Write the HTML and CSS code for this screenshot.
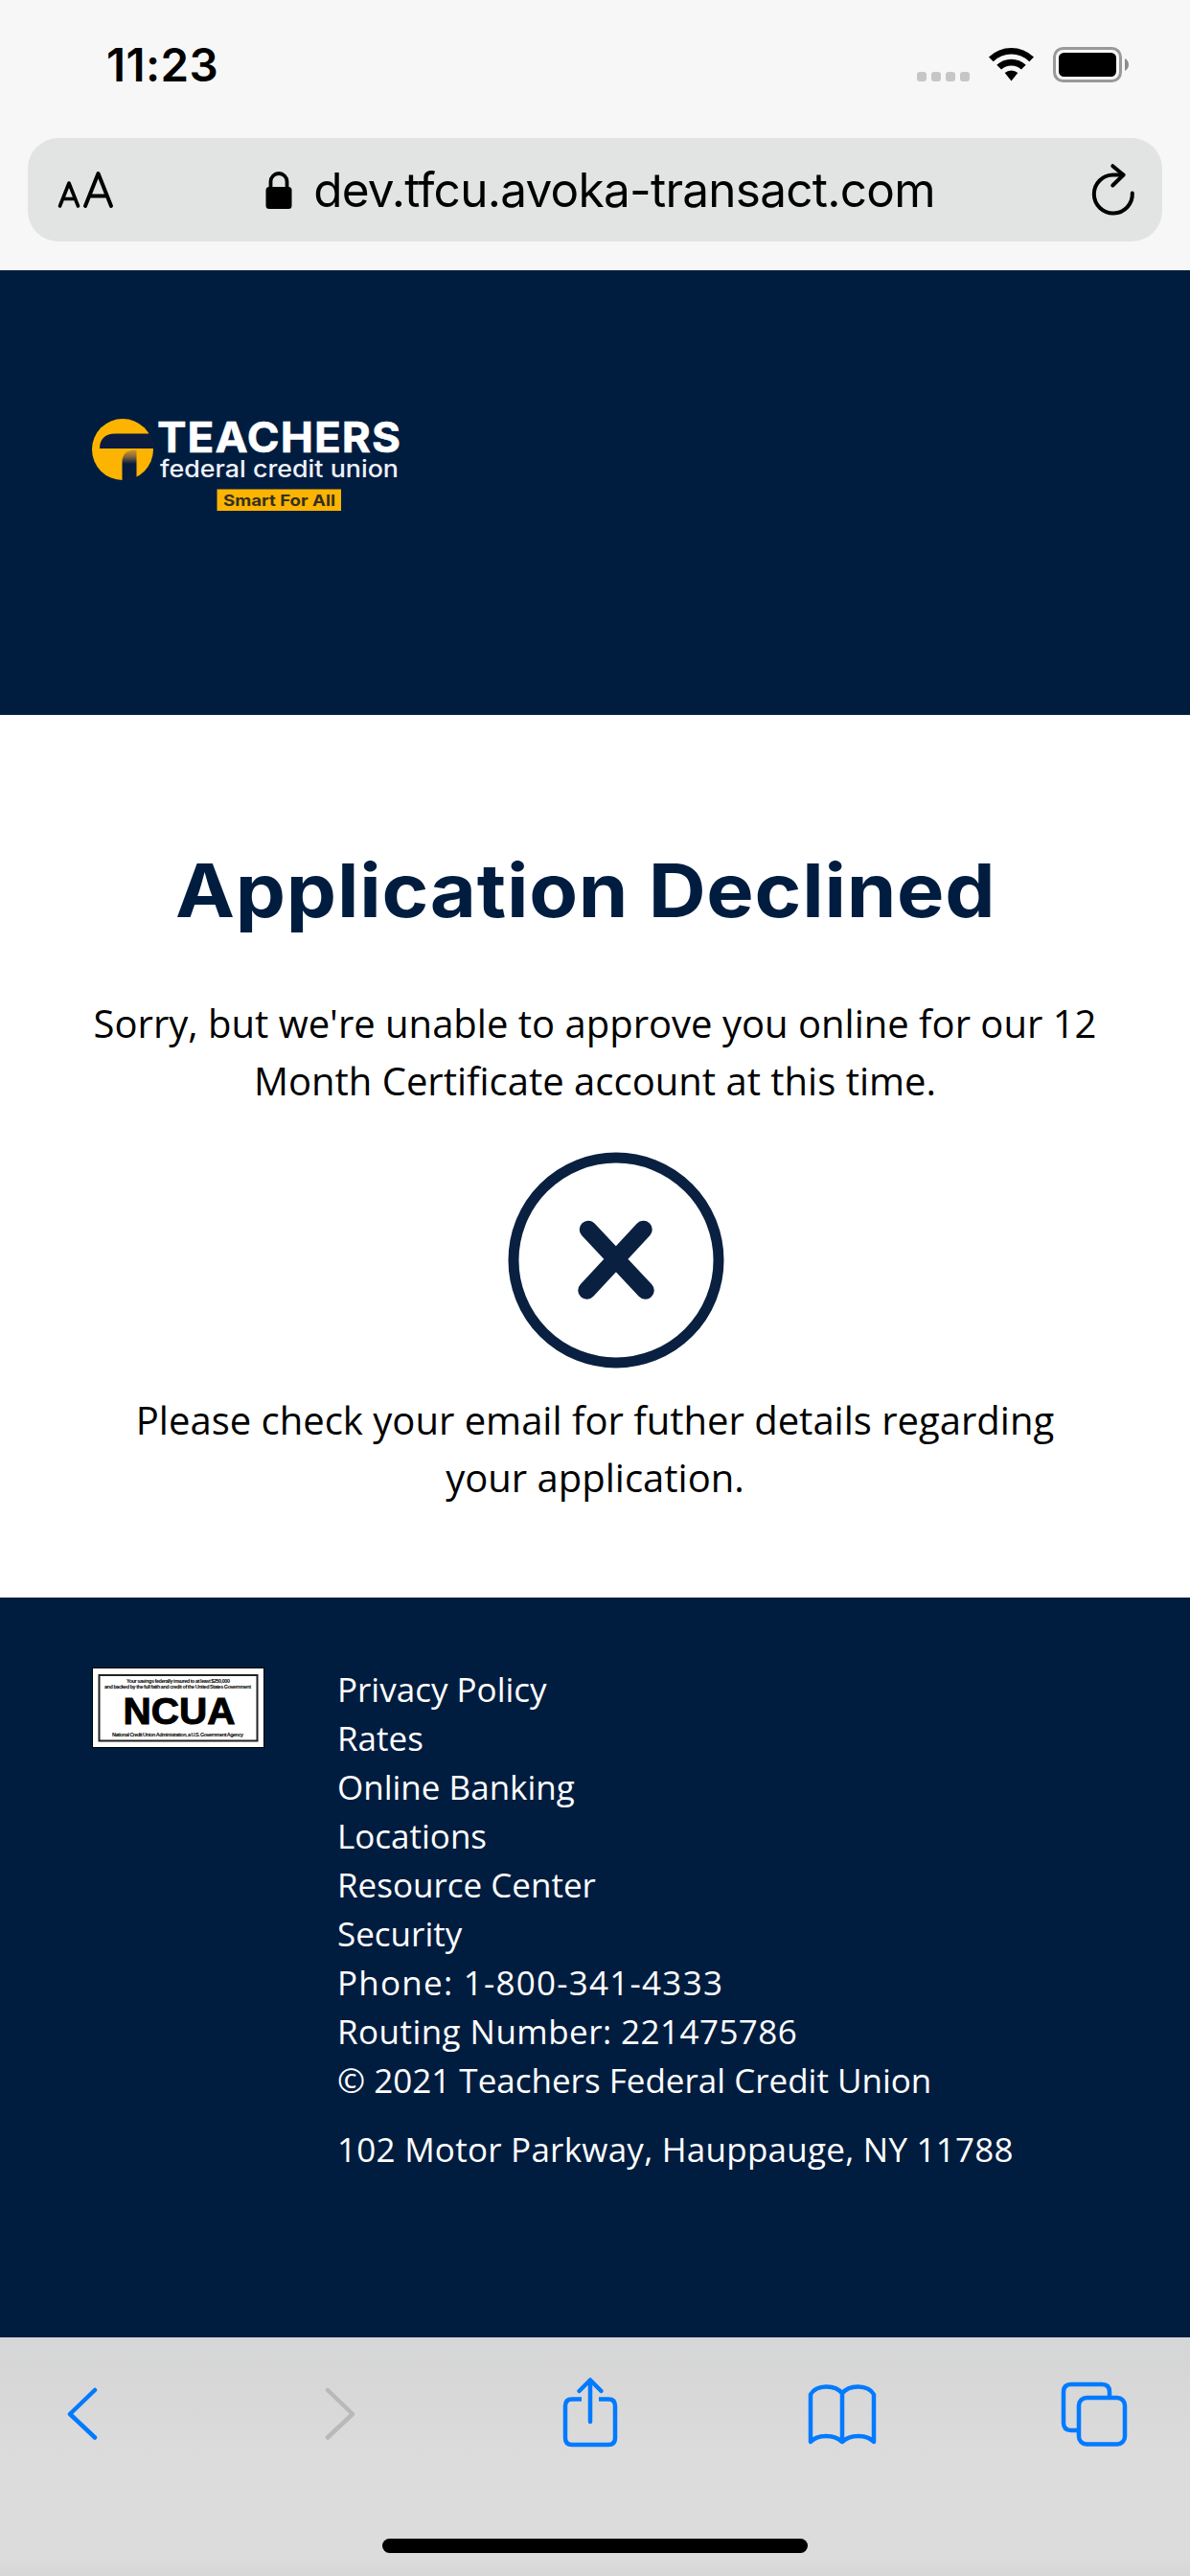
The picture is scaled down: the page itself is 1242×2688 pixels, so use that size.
FILE: index.html
```html
<!DOCTYPE html>
<html lang="en">
<head>
<meta charset="utf-8">
<title>Application Declined</title>
<link rel="stylesheet" href="styles.css">
</head>
<body>
<div class="screen">
  <header class="chrome">
    <div class="status">
      <span class="time">11:23</span>
      <svg class="status-icons" width="224" height="40" viewBox="0 0 224 40">
        <g fill="#c6c6c6">
          <rect x="2" y="27" width="10" height="10" rx="3"/>
          <rect x="17" y="27" width="10" height="10" rx="3"/>
          <rect x="32" y="27" width="10" height="10" rx="3"/>
          <rect x="47" y="27" width="10" height="10" rx="3"/>
        </g>
        <path d="M77 11.500A34 34 0 0 1 124 11.500L119.300 16.200A27 27 0 0 0 81.700 16.200Z"/>
        <path d="M85.300 19.800A22 22 0 0 1 115.700 19.800L110.900 24.600A15 15 0 0 0 90.100 24.600Z"/>
        <path d="M93.700 28.100A10 10 0 0 1 107.300 28.100L100.500 36.500Z"/>
        <rect x="145.500" y="2.500" width="69" height="34" rx="9" fill="none" stroke="#999" stroke-width="3"/>
        <rect x="150" y="7" width="60" height="25" rx="5.500"/>
        <path d="M219 13c5.300 2.300 5.300 10.700 0 13z" fill="#8c8c8c"/>
      </svg>
    </div>
    <div class="address-bar">
      <svg class="text-size" width="60" height="40" viewBox="0 0 60 40" fill="none" stroke="#000" stroke-width="3.600" stroke-linecap="round" stroke-linejoin="round">
        <path d="M3.500 37L13 13L22.500 37M7 29.500H19"/>
        <path stroke-width="4" d="M30 37L43.500 3L57 37M34.500 26.500H52.500"/>
      </svg>
      <div class="host">
        <svg width="28" height="40" viewBox="0 0 28 40">
          <rect x="0.500" y="17" width="27" height="23" rx="3.500"/>
          <path d="M5.500 18V11.500a8.500 8.500 0 0 1 17 0V18" fill="none" stroke="#000" stroke-width="3.800"/>
        </svg>
        <span class="url">dev.tfcu.avoka-transact.com</span>
      </div>
      <svg class="reload" width="48" height="56" viewBox="0 0 48 56" fill="none" stroke="#000" stroke-width="4" stroke-linecap="round" stroke-linejoin="round">
        <path d="M43.800 31.500A20 20 0 1 1 23.800 12.500H34.500"/>
        <path d="M23.300 3.200L34.500 12.500L23.300 23.500"/>
      </svg>
    </div>
  </header>

  <div class="banner">
    <svg class="logo" width="324" height="98" viewBox="0 0 324 98">
      <defs>
        <clipPath id="disc"><circle cx="32" cy="32" r="32.500"/></clipPath>
        <linearGradient id="stem" x1="0" y1="31" x2="0" y2="47" gradientUnits="userSpaceOnUse">
          <stop offset="0" stop-color="#e0a01c"/><stop offset=".5" stop-color="#8b6c3c"/><stop offset="1" stop-color="#071b3d"/>
        </linearGradient>
      </defs>
      <circle cx="32" cy="32" r="32" fill="#fdb400"/>
      <g clip-path="url(#disc)">
        <path d="M8 31C8 21 14 15.500 24 15.500H66V31Z" fill="#0c1b3e"/>
        <path d="M31.500 66V45C31.500 37 36 32.500 46.500 32.500V66Z" fill="url(#stem)"/>
      </g>
      <g class="logo-text">
        <text x="68" y="35" font-size="44.500" font-weight="700" fill="#fff" stroke="#fff" stroke-width=".6" letter-spacing="1" textLength="255" lengthAdjust="spacingAndGlyphs">TEACHERS</text>
        <text x="71" y="61" font-size="24.500" font-weight="500" fill="#eef1fa" textLength="249" lengthAdjust="spacingAndGlyphs">federal credit union</text>
        <rect x="130.500" y="73.500" width="129.500" height="22.500" fill="#fdb400"/>
        <text x="137" y="91" font-size="16.500" font-weight="700" fill="#333022" textLength="117" lengthAdjust="spacingAndGlyphs">Smart For All</text>
      </g>
    </svg>
  </div>

  <main class="result">
    <h1>Application Declined</h1>
    <p>Sorry, but we're unable to approve you online for our 12<br>Month Certificate account at this time.</p>
    <svg class="cross" width="226" height="226" viewBox="0 0 226 226" fill="none" stroke="#0a2040">
      <circle cx="113" cy="113" r="107" stroke-width="11"/>
      <path d="M84 81L143.500 144.500M141.500 81L82.500 144.500" stroke-width="18.500" stroke-linecap="round"/>
    </svg>
    <p>Please check your email for futher details regarding<br>your application.</p>
  </main>

  <footer class="footer">
    <svg class="ncua" width="180" height="84" viewBox="0 0 180 84">
      <rect x=".5" y=".5" width="179" height="83" fill="#fff" stroke="#000"/>
      <rect x="7.500" y="8" width="165" height="68.500" fill="none" stroke="#222" stroke-width="2"/>
      <g class="ncua-text">
        <text x="36" y="16" font-size="5.500" textLength="108">Your savings federally insured to at least $250,000</text>
        <text x="13" y="22" font-size="5.500" textLength="153">and backed by the full faith and credit of the United States Government</text>
        <text x="32.500" y="58.500" font-size="39" stroke="#000" stroke-width="1" textLength="117" lengthAdjust="spacingAndGlyphs">NCUA</text>
        <text x="21" y="71.500" font-size="5.500" textLength="137">National Credit Union Administration, a U.S. Government Agency</text>
      </g>
    </svg>
    <div class="links">
      <a>Privacy Policy</a>
      <a>Rates</a>
      <a>Online Banking</a>
      <a>Locations</a>
      <a>Resource Center</a>
      <a>Security</a>
      <span class="phone">Phone: 1-800-341-4333</span>
      <span class="routing">Routing Number: 221475786</span>
      <span>© 2021 Teachers Federal Credit Union</span>
      <span class="street">102 Motor Parkway, Hauppauge, NY 11788</span>
    </div>
  </footer>

  <nav class="toolbar">
    <div class="actions">
      <svg width="38" height="80" viewBox="0 0 38 80"><path d="M32 15L6 40L32 64.500"/></svg>
      <svg class="disabled" width="38" height="80" viewBox="0 0 38 80"><path d="M7 15L33 40L7 64.500"/></svg>
      <svg width="60" height="80" viewBox="0 0 60 80">
        <path stroke-linecap="butt" d="M21 24.500H11Q4 24.500 4 31.500V65Q4 72 11 72H49Q56 72 56 65V31.500Q56 24.500 49 24.500H39"/>
        <path d="M30 48V5M18.500 16L30 4.500L41.500 16"/>
      </svg>
      <svg width="74" height="80" viewBox="0 0 74 80">
        <path d="M4 69V19.500C10 9 30 9 37 18.500C44 9 64 9 70 19.500V69C62 61 46 61 37 69C28 61 12 61 4 69ZM37 18.500V69"/>
      </svg>
      <svg width="72" height="80" viewBox="0 0 72 80">
        <path d="M18 57H12Q4 57 4 49V17Q4 9 12 9H44Q52 9 52 17V22"/>
        <rect x="20" y="23" width="48" height="48.500" rx="8"/>
      </svg>
    </div>
    <div class="home"></div>
  </nav>
</div>
</body>
</html>
```

FILE: styles.css
```css
* { box-sizing: border-box; }

body {
  margin: 0;
  background: #fff;
  color: #000;
  font-family: "Open Sans", "Noto Sans", sans-serif;
}

svg { display: block; flex: none; }

.screen {
  display: flex;
  flex-direction: column;
  width: 1242px;
  height: 2688px;
}

/* Browser chrome */
.chrome {
  height: 282px;
  padding: 38px 29px 0;
  background: #f7f7f7;
  font-family: Inter, "Liberation Sans", sans-serif;
}

.status {
  display: flex;
  justify-content: space-between;
  height: 106px;
  padding: 0 34px 0 82px;
}

.time {
  font-size: 47.5px;
  font-weight: 600;
  line-height: 60px;
  letter-spacing: 0.4px;
}

.status-icons { margin-top: 10px; }

.address-bar {
  display: flex;
  align-items: center;
  justify-content: space-between;
  height: 108px;
  padding: 0 27px 0 30px;
  border-radius: 32px;
  background: #e2e4e3;
}

.host {
  display: flex;
  align-items: center;
  gap: 22px;
  margin-right: 4px;
}

.url {
  font-size: 49.5px;
  line-height: 60px;
  letter-spacing: -0.75px;
}

/* Brand banner */
.banner {
  height: 464px;
  padding: 155px 96px 0;
  background: #001d40;
}

.logo { overflow: visible; }
.logo-text { font-family: Inter, sans-serif; }

/* Result message */
.result {
  display: flex;
  flex-direction: column;
  align-items: center;
  height: 921px;
  padding-top: 137px;
  text-align: center;
}

h1 {
  margin: 0 20px 63px 0;
  color: #001d40;
  font-family: Inter, sans-serif;
  font-size: 77px;
  font-weight: 700;
  line-height: 92px;
  letter-spacing: 0.7px;
  transform: scaleX(1.078);
}

.result p {
  margin: 0;
  font-size: 40px;
  line-height: 60px;
}

.cross { margin: 44px 0 24px 43px; }

/* Site footer */
.footer {
  display: flex;
  align-items: flex-start;
  gap: 76px;
  height: 772px;
  padding: 70px 96px 0;
  background: #001d40;
}

.ncua { margin-top: 3px; }

.ncua-text {
  font-family: "Liberation Sans", Arial, sans-serif;
  font-weight: 700;
}

.links {
  display: flex;
  flex-direction: column;
  color: #fff;
  font-size: 35px;
  line-height: 51px;
}

.phone { letter-spacing: 1.25px; }
.routing { letter-spacing: 0.45px; }

.street {
  margin-top: 21px;
  letter-spacing: 0.25px;
}

/* Browser toolbar */
.toolbar {
  display: flex;
  flex-direction: column;
  align-items: center;
  height: 249px;
  padding-top: 40px;
  background: linear-gradient(#d5d7d8, #d6d6d6 30px, #dcdcdc 130px, #dcdcdc 230px, #d6d6d6);
}

.actions {
  display: grid;
  grid-template-columns: 268px 251px 256px 264px auto;
  width: 100%;
  height: 170px;
  padding-left: 67px;
  fill: none;
  stroke: #007aff;
  stroke-width: 4.5;
  stroke-linecap: round;
  stroke-linejoin: round;
}

.disabled { stroke: #b9b9b9; }

.home {
  width: 444px;
  height: 15px;
  border-radius: 8px;
  background: #000;
}
```
